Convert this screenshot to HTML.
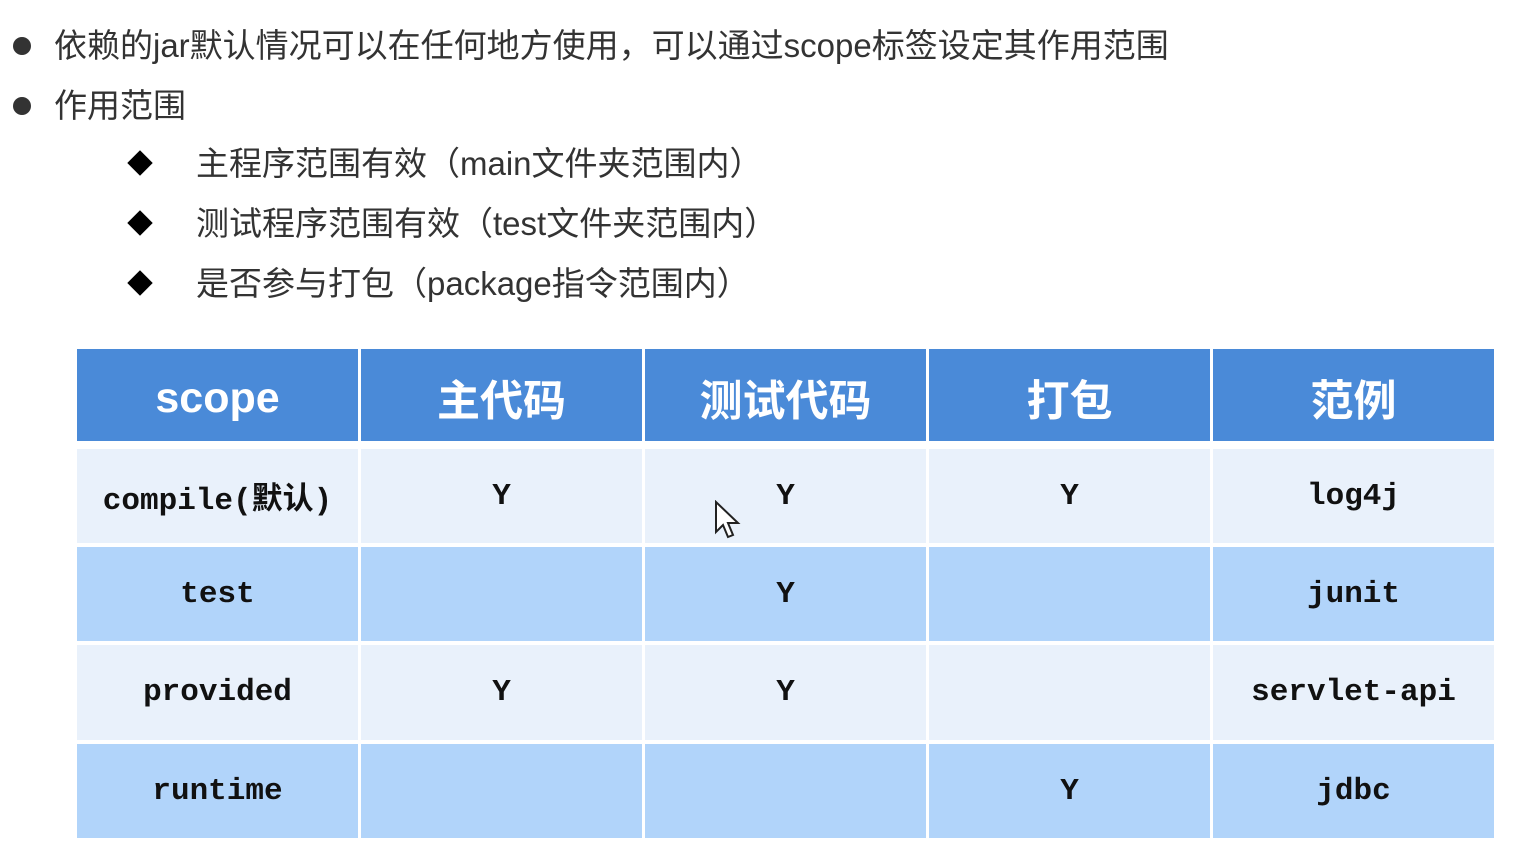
<!DOCTYPE html>
<html><head><meta charset="utf-8"><style>
body{margin:0;width:1514px;height:863px;background:#fff;position:relative;overflow:hidden;font-family:"Liberation Sans","Noto Sans CJK SC",sans-serif;color:#333}
.l{position:absolute;font-size:33px;line-height:40px;white-space:nowrap}
.dot{position:absolute;width:18px;height:18px;border-radius:50%;background:#333}
.dia{position:absolute;width:18px;height:18px;background:#000;transform:rotate(45deg)}
.c{position:absolute;display:flex;align-items:center;justify-content:center;width:281px;font-family:"Liberation Mono","Noto Sans CJK SC",monospace;font-weight:bold;font-size:31px;color:#111}
.h{background:#4a8ad8;color:#fff;font-family:"Liberation Sans","Noto Sans CJK SC",sans-serif;font-size:43px;height:86px;padding-top:6px;top:349px}
.a{background:#e9f1fb}.b{background:#b1d4fa}
</style></head><body>
<div class="dot" style="left:13px;top:37px"></div>
<div class="l" style="left:54px;top:26px">依赖的jar默认情况可以在任何地方使用，可以通过scope标签设定其作用范围</div>
<div class="dot" style="left:13px;top:97px"></div>
<div class="l" style="left:54px;top:86px">作用范围</div>
<div class="dia" style="left:131px;top:154px"></div>
<div class="l" style="left:196px;top:144px">主程序范围有效（main文件夹范围内）</div>
<div class="dia" style="left:131px;top:214px"></div>
<div class="l" style="left:196px;top:204px">测试程序范围有效（test文件夹范围内）</div>
<div class="dia" style="left:131px;top:274px"></div>
<div class="l" style="left:196px;top:264px">是否参与打包（package指令范围内）</div>

<div class="c h" style="left:77px">scope</div>
<div class="c h" style="left:361px">主代码</div>
<div class="c h" style="left:645px">测试代码</div>
<div class="c h" style="left:929px">打包</div>
<div class="c h" style="left:1213px">范例</div>

<div class="c a" style="left:77px;top:449px;height:94px">compile(默认)</div>
<div class="c a" style="left:361px;top:449px;height:94px">Y</div>
<div class="c a" style="left:645px;top:449px;height:94px">Y</div>
<div class="c a" style="left:929px;top:449px;height:94px">Y</div>
<div class="c a" style="left:1213px;top:449px;height:94px">log4j</div>

<div class="c b" style="left:77px;top:547px;height:94px">test</div>
<div class="c b" style="left:361px;top:547px;height:94px"></div>
<div class="c b" style="left:645px;top:547px;height:94px">Y</div>
<div class="c b" style="left:929px;top:547px;height:94px"></div>
<div class="c b" style="left:1213px;top:547px;height:94px">junit</div>

<div class="c a" style="left:77px;top:645px;height:95px">provided</div>
<div class="c a" style="left:361px;top:645px;height:95px">Y</div>
<div class="c a" style="left:645px;top:645px;height:95px">Y</div>
<div class="c a" style="left:929px;top:645px;height:95px"></div>
<div class="c a" style="left:1213px;top:645px;height:95px">servlet-api</div>

<div class="c b" style="left:77px;top:744px;height:94px">runtime</div>
<div class="c b" style="left:361px;top:744px;height:94px"></div>
<div class="c b" style="left:645px;top:744px;height:94px"></div>
<div class="c b" style="left:929px;top:744px;height:94px">Y</div>
<div class="c b" style="left:1213px;top:744px;height:94px">jdbc</div>

<svg style="position:absolute;left:714px;top:500px" width="28" height="40" viewBox="0 0 28 40"><path d="M2 2 L2 32 L9 25 L14 37 L19 35 L14 23 L24 23 Z" fill="#fff" stroke="#222" stroke-width="2"/></svg>
</body></html>
